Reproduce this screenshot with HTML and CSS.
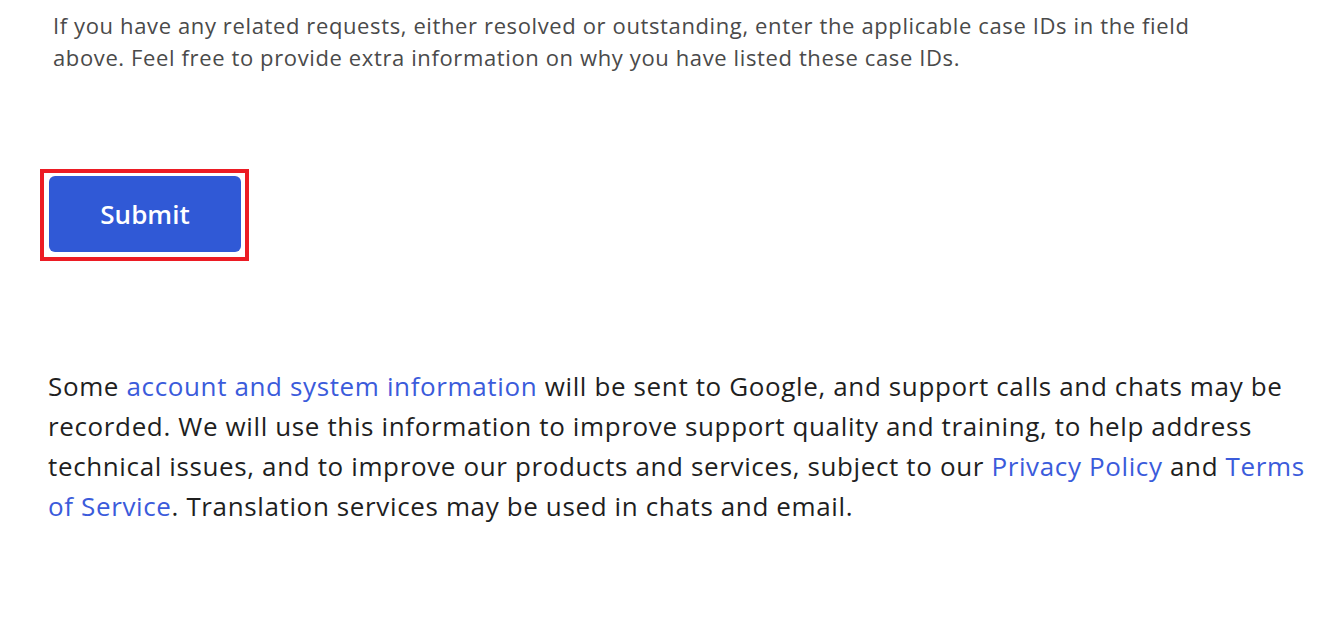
FILE: index.html
```html
<!DOCTYPE html>
<html>
<head>
<meta charset="utf-8">
<link rel="stylesheet" href="styles.css">
</head>
<body>
<main class="page">
  <p class="hint">If you have any related requests, either resolved or outstanding, enter the applicable case IDs in the field above. Feel free to provide extra information on why you have listed these case IDs.</p>
  <div class="submit-wrap">
    <button class="submit" type="button">Submit</button>
  </div>
  <p class="notice">Some <a href="#">account and system information</a> will be sent to Google, and support calls and chats may be recorded. We will use this information to improve support quality and training, to help address technical issues, and to improve our products and services, subject to our <a href="#">Privacy Policy</a> and <a href="#">Terms of Service</a>. Translation services may be used in chats and email.</p>
</main>
</body>
</html>
```
FILE: styles.css
```css
html, body {
  margin: 0;
  padding: 0;
  background: #fff;
}
.page {
  padding: 9px 0 0 48px;
  width: 1270px;
  font-family: "Open Sans", "Liberation Sans", sans-serif;
}
.hint {
  margin: 0 0 0 5px;
  width: 1200px;
  font-size: 22px;
  line-height: 32px;
  letter-spacing: 0.62px;
  color: #4a4a4a;
}
.submit-wrap {
  display: inline-block;
  margin: 96px 0 0 -8px;
  border: 4px solid #ec1c24;
  padding: 3px 4px 5px 5px;
}
.submit {
  display: block;
  width: 192px;
  height: 76px;
  border: none;
  border-radius: 6px;
  background: #3059d6;
  color: #fff;
  font-family: "Open Sans", "Liberation Sans", sans-serif;
  font-size: 26px;
  font-weight: 600;
  cursor: pointer;
}
.notice {
  margin: 105px 0 0 0;
  width: 1266px;
  font-size: 26px;
  line-height: 40px;
  letter-spacing: 0.63px;
  color: #1f1f1f;
}
.notice a {
  color: #3b5bdb;
  text-decoration: none;
}
```
